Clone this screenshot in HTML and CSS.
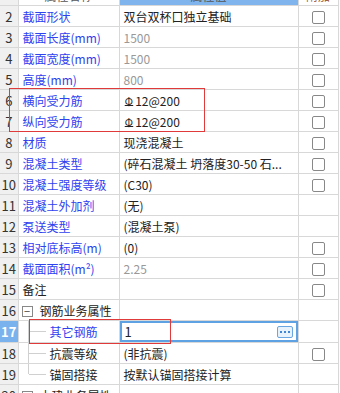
FILE: index.html
```html
<!DOCTYPE html>
<html lang="zh-CN">
<head>
  <meta charset="UTF-8">
  <title>属性编辑</title>
  <link rel="stylesheet" href="styles.css">
</head>
<body>
  <div class="wrap">
    <table class="grid">
      <colgroup>
        <col class="c-no"><col class="c-name"><col class="c-val"><col class="c-chk">
      </colgroup>
      <tr class="head">
        <td class="no"></td><td>属性名称</td><td class="on">属性值</td><td class="chk-head">附加</td>
      </tr>
      <tr><td class="no">2</td><td class="name">截面形状</td><td>双台双杯口独立基础</td><td class="chk"><span class="box"></span></td></tr>
      <tr><td class="no">3</td><td class="name">截面长度(mm)</td><td class="grey">1500</td><td class="chk"><span class="box"></span></td></tr>
      <tr><td class="no">4</td><td class="name">截面宽度(mm)</td><td class="grey">1500</td><td class="chk"><span class="box"></span></td></tr>
      <tr><td class="no">5</td><td class="name">高度(mm)</td><td class="grey">800</td><td class="chk"><span class="box"></span></td></tr>
      <tr><td class="no">6</td><td class="name">横向受力筋</td><td><span class="bar">Φ</span>12@200</td><td class="chk"><span class="box"></span></td></tr>
      <tr><td class="no">7</td><td class="name">纵向受力筋</td><td><span class="bar">Φ</span>12@200</td><td class="chk"><span class="box"></span></td></tr>
      <tr><td class="no">8</td><td class="name">材质</td><td>现浇混凝土</td><td class="chk"><span class="box"></span></td></tr>
      <tr><td class="no">9</td><td class="name">混凝土类型</td><td><div class="cut">(碎石混凝土 坍落度30-50 石...</div></td><td class="chk"><span class="box"></span></td></tr>
      <tr><td class="no">10</td><td class="name">混凝土强度等级</td><td>(C30)</td><td class="chk"><span class="box"></span></td></tr>
      <tr><td class="no">11</td><td class="name">混凝土外加剂</td><td>(无)</td><td class="chk"></td></tr>
      <tr><td class="no">12</td><td class="name">泵送类型</td><td>(混凝土泵)</td><td class="chk"></td></tr>
      <tr><td class="no">13</td><td class="name">相对底标高(m)</td><td>(0)</td><td class="chk"><span class="box"></span></td></tr>
      <tr><td class="no">14</td><td class="name">截面面积(m²)</td><td class="grey">2.25</td><td class="chk"><span class="box"></span></td></tr>
      <tr><td class="no">15</td><td>备注</td><td></td><td class="chk"><span class="box"></span></td></tr>
      <tr><td class="no">16</td><td><span class="tog">−</span>钢筋业务属性</td><td></td><td class="chk"></td></tr>
      <tr><td class="no sel">17</td><td class="name sub"><span class="line"></span>其它钢筋</td><td class="edit"><div class="editbox"><span>1</span><span class="more"><i></i><i></i><i></i></span></div></td><td class="chk"></td></tr>
      <tr><td class="no">18</td><td class="sub"><span class="line"></span>抗震等级</td><td>(非抗震)</td><td class="chk"><span class="box"></span></td></tr>
      <tr><td class="no">19</td><td class="sub"><span class="line last"></span>锚固搭接</td><td>按默认锚固搭接计算</td><td class="chk"></td></tr>
      <tr><td class="no">20</td><td><span class="tog">+</span>土建业务属性</td><td></td><td class="chk"></td></tr>
    </table>
    <div class="mark mark-a"></div>
    <div class="mark mark-b"></div>
  </div>
</body>
</html>
```

FILE: styles.css
```css
*{
  margin: 0;
  padding: 0;
  box-sizing: border-box;
}
body{
  width: 340px;
  height: 393px;
  overflow: hidden;
  background: #fff;
  font-family: "Noto Sans CJK SC", "DejaVu Sans", sans-serif;
  font-size: 12px;
  color: #222;
}
.wrap{
  position: relative;
  height: 393px;
  overflow: hidden;
}
.grid{
  margin-top: -16px;
  border-collapse: collapse;
  table-layout: fixed;
  width: 338px;
}
.c-no{ width: 18px; }
.c-name{ width: 101px; }
.c-val{ width: 179px; }
.c-chk{ width: 40px; }
.grid td{
  height: 21px;
  border: 1px solid #d8d8d8;
  padding: 0 0 0 4px;
  white-space: nowrap;
  overflow: hidden;
  line-height: 19px;
  vertical-align: middle;
}
.grid tr td:first-child{
  border-left: none;
}
.grid td.no{
  background: #f0f0f0;
  padding: 0;
  text-align: center;
  font-size: 13px;
  color: #333;
}
.grid td.no.sel{
  background: #79b2ec;
  color: #fff;
  font-weight: bold;
}
.head td{
  text-align: center;
  padding: 0;
  color: #555;
}
.head td.on{
  background: #7fb5ec;
}
.head td.chk-head{
  color: #a06040;
}
.name{
  color: #2f42f0;
}
.grey{
  color: #999;
}
.cut{
  width: 174px;
  overflow: hidden;
}
.bar{
  display: inline-block;
  position: relative;
  font-size: 12px;
  transform: scaleX(0.85);
  margin-right: 2px;
}
.bar::after{
  content: "";
  position: absolute;
  left: 0;
  right: 0;
  bottom: 4px;
  height: 1px;
  background: #222;
}
.chk{
  text-align: center;
}
.grid td.chk{
  padding: 0;
}
.box{
  display: inline-block;
  width: 13px;
  height: 13px;
  border: 1px solid #888;
  border-radius: 2px;
  vertical-align: middle;
  margin-top: -2px;
}
.tog{
  display: inline-block;
  width: 11px;
  height: 11px;
  border: 1px solid #888;
  line-height: 9px;
  text-align: center;
  font-size: 11px;
  color: #444;
  margin: 0 7px 0 -1px;
  vertical-align: middle;
  margin-top: -2px;
}
.sub{
  position: relative;
  padding-left: 31px !important;
}
.line{
  position: absolute;
  left: 9px;
  top: -1px;
  bottom: -1px;
  width: 18px;
  border-left: 1px solid #d0d0d0;
}
.line::after{
  content: "";
  position: absolute;
  left: 0;
  right: 0;
  top: 11px;
  border-top: 1px solid #d0d0d0;
}
.line.last{
  bottom: 10px;
}
.grid td.edit{
  padding: 0;
}
.editbox{
  height: 21px;
  border: 2px solid #5fa2e4;
  display: flex;
  align-items: center;
  justify-content: space-between;
  padding: 0 3px 0 3px;
  font-size: 13px;
}
.more{
  width: 16px;
  height: 12px;
  border: 1px solid #6aa6e2;
  border-radius: 2px;
  background: #e8f2fc;
  display: flex;
  align-items: center;
  justify-content: center;
  gap: 2px;
}
.more i{
  width: 2px;
  height: 2px;
  background: #3f86d6;
}
.mark{
  position: absolute;
  border: 1px solid #e03a3a;
}
.mark-a{
  left: 9px;
  top: 88px;
  width: 196px;
  height: 44px;
}
.mark-b{
  left: 29px;
  top: 319px;
  width: 142px;
  height: 25px;
}
```
